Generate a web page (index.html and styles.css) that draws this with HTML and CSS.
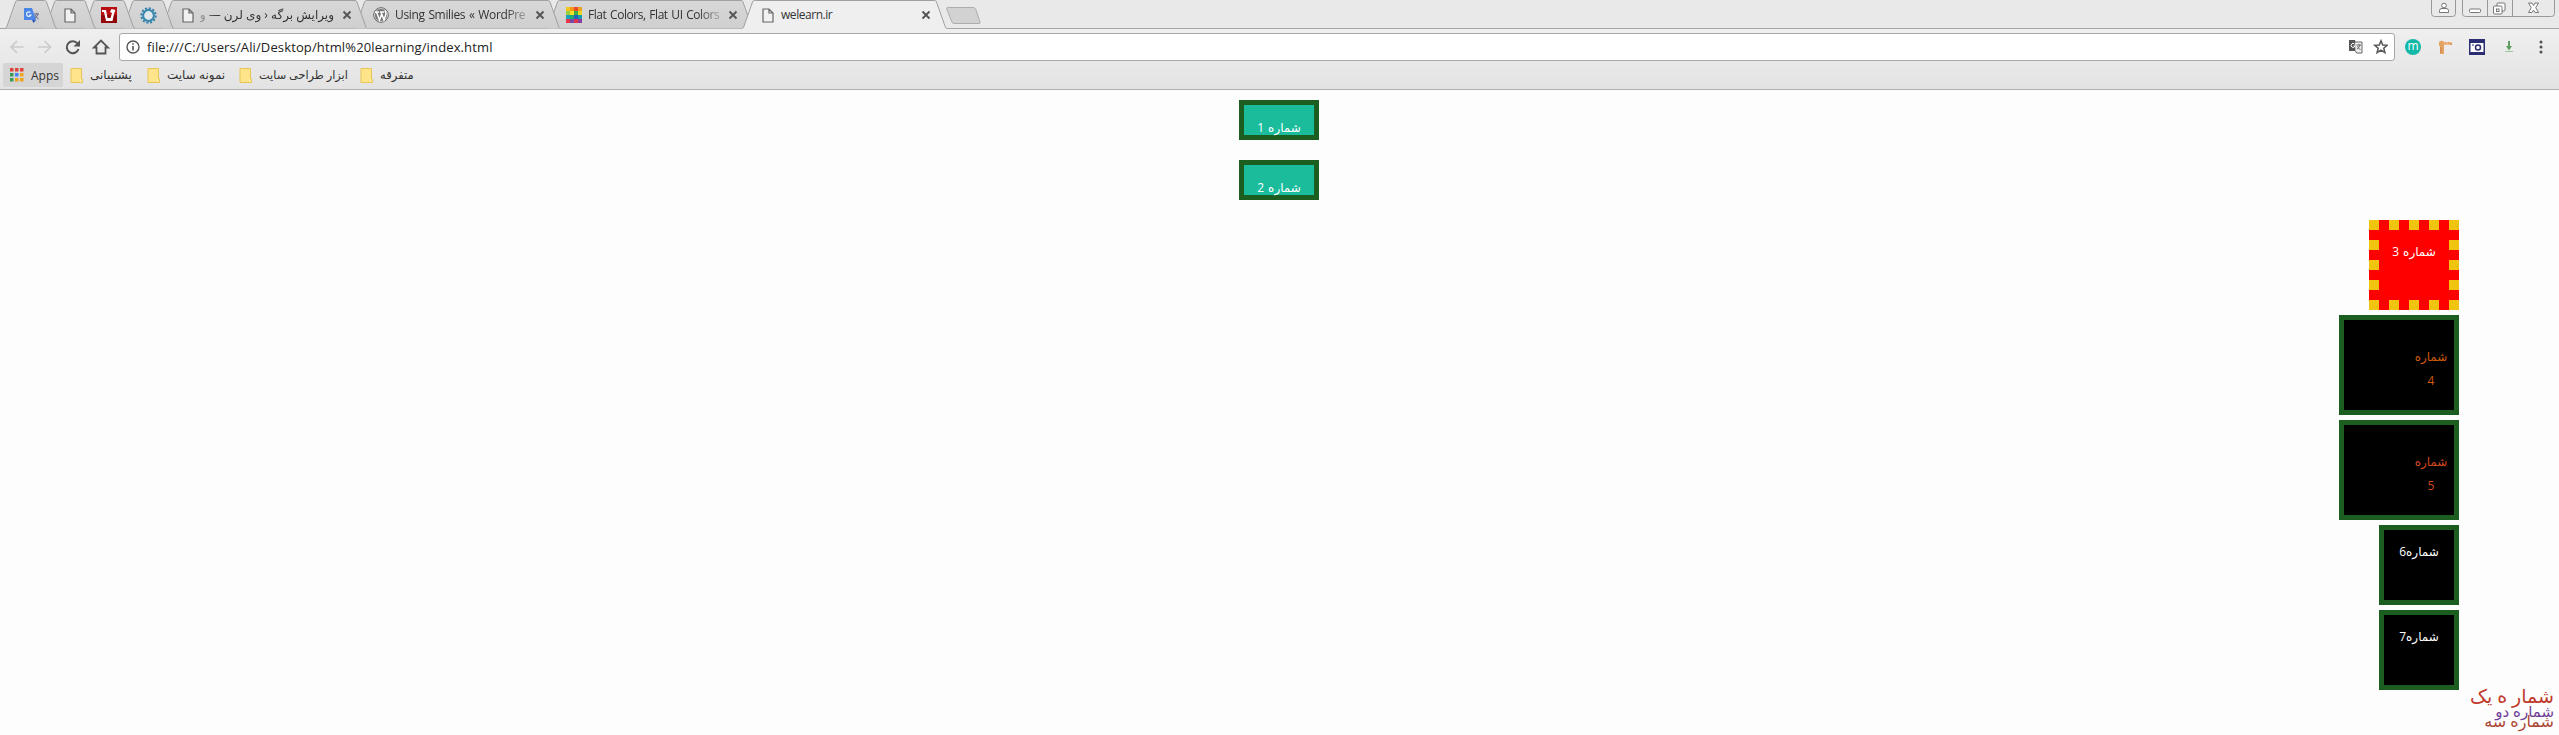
FILE: index.html
```
<!DOCTYPE html>
<html lang="en">
<head>
<meta charset="utf-8">
<title>welearn.ir</title>
<link rel="stylesheet" href="styles.css">
</head>
<body>
<svg width="0" height="0" class="defs">
  <defs>
    <linearGradient id="tabFill" x1="0" y1="0" x2="0" y2="1"><stop offset="0" stop-color="#d8d8d8"/><stop offset="1" stop-color="#cfcfcf"/></linearGradient>
    <symbol id="mini" viewBox="0 0 52 29"><path d="M0 28.5 1.5 27.5 10.5 2Q11 .5 12.500 .5H39.500Q41 .5 41.500 2L50.500 27.500 52 28.500" fill="url(#tabFill)" stroke="#a0a0a0"/></symbol>
    <symbol id="full" viewBox="0 0 206 29"><path d="M0 28.500 1.500 27.500 10.500 2Q11 .5 12.500 .5H194Q195.500 .5 196 2L205 27.500 206 28.500" fill="url(#tabFill)" stroke="#a0a0a0"/></symbol>
    <symbol id="page" viewBox="0 0 12 15"><path d="M1 1H7L11 5V14H1ZM7 1V5H11" fill="#f1f1f1" stroke="#666" stroke-width="1.200"/></symbol>
    <symbol id="close" viewBox="0 0 10 10"><path d="M1.500 1.500 8.500 8.500M8.500 1.500 1.500 8.500" stroke="#555" stroke-width="1.900" fill="none"/></symbol>
    <symbol id="folder" viewBox="0 0 13 15"><path d="M1 .5H11.500V11H12.500V14.500H1Z" fill="#ffe48a" stroke="#e9c456"/><path d="M10.500 11V14" stroke="#fff0b5"/></symbol>
  </defs>
</svg>

<header class="browser">
  <div class="tabstrip">
    <nav class="tabs">
      <div class="tab mini z8"><svg class="shape"><use href="#mini"/></svg>
        <svg class="icon" width="17" height="17" viewBox="0 0 17 17"><path d="M7 4H16V16H11Z" fill="#c9cdd2"/><path d="M1 1H9L13 13H1Z" fill="#4a86e8"/><path d="M9 13H13L10.500 16Z" fill="#2b56b5"/><path d="M7.500 5.500A2.300 2.300 0 1 0 8 8H6" stroke="#e8f0ff" stroke-width="1.200" fill="none"/><path d="M11 7H16M13.500 6V7M15 7Q14 10 11.500 11.500M12 8Q13 10.500 15.500 12" stroke="#668" fill="none"/></svg></div>
      <div class="tab mini z7"><svg class="shape"><use href="#mini"/></svg><svg class="icon" width="12" height="15"><use href="#page"/></svg></div>
      <div class="tab mini z6"><svg class="shape"><use href="#mini"/></svg>
        <svg class="icon" width="16" height="16" viewBox="0 0 16 16"><path d="M0 0H16V16H0Z" fill="#b90f12"/><path d="M0 8H16V16H0Z" fill="#940609"/><path d="M1 3H5L6.500 11H9.500L11 6 9 5 10.500 2 14.500 3 13 7 11.500 14H5L3 5H1Z" fill="#fff"/></svg></div>
      <div class="tab mini z5"><svg class="shape"><use href="#mini"/></svg>
        <svg class="icon" width="17" height="17" viewBox="0 0 17 17"><circle cx="8.500" cy="8.500" r="7.200" fill="none" stroke="#3585ad" stroke-width="2" stroke-dasharray="2.200 1.570"/><circle cx="8.500" cy="8.500" r="5.400" fill="#dfe8ec" stroke="#3585ad" stroke-width="2"/></svg></div>
      <div class="tab full first z4"><svg class="shape"><use href="#full"/></svg><svg class="icon" width="12" height="15"><use href="#page"/></svg><span class="title rtl" dir="rtl">ویرایش برگه ‹ وی لرن — و</span><svg class="close"><use href="#close"/></svg></div>
      <div class="tab full z3"><svg class="shape"><use href="#full"/></svg>
        <svg class="icon" width="16" height="16" viewBox="0 0 16 16"><circle cx="8" cy="8" r="7.300" fill="#777" stroke="#666"/><circle cx="8" cy="8" r="6.500" fill="none" stroke="#ddd" stroke-width=".8"/><path d="M2 5H6M3.500 5 6.500 13 8.500 7.500M7 5H11M8 5 11 13 13 7Q13 5 11.800 3.500" fill="none" stroke="#fff" stroke-width="1.500"/></svg>
        <span class="title fade">Using Smilies « WordPre</span><svg class="close"><use href="#close"/></svg></div>
      <div class="tab full z2"><svg class="shape"><use href="#full"/></svg>
        <svg class="icon" width="16" height="16" viewBox="0 0 16 16"><path d="M0 0H4V4H0Z" fill="#f5c51b"/><path d="M4 0H8V4H4Z" fill="#f39b17"/><path d="M8 0H12V4H8Z" fill="#e94a2b"/><path d="M12 0H16V4H12Z" fill="#f0a020"/><path d="M0 4H4V8H0Z" fill="#9acb38"/><path d="M4 4H8V8H4Z" fill="#f6df28"/><path d="M8 4H12V8H8Z" fill="#35b04a"/><path d="M12 4H16V8H12Z" fill="#e5d825"/><path d="M0 8H4V12H0Z" fill="#16a5bd"/><path d="M4 8H8V12H4Z" fill="#21aa72"/><path d="M8 8H12V12H8Z" fill="#2360bb"/><path d="M12 8H16V12H12Z" fill="#159cad"/><path d="M0 12H4V16H0Z" fill="#e8334a"/><path d="M4 12H8V16H4Z" fill="#744aa8"/><path d="M8 12H12V16H8Z" fill="#df3450"/><path d="M12 12H16V16H12Z" fill="#8b3b9c"/></svg>
        <span class="title fade flat">Flat Colors, Flat UI Colors</span><svg class="close"><use href="#close"/></svg></div>
      <div class="tab full active"><svg class="shape" viewBox="0 0 207 29"><path d="M0 28.500 1.500 27.500 10.500 2Q11 .5 12.500 .5H192.500Q194 .5 194.500 2L203.500 27.500 205 28.500V29H0Z" fill="#efefef"/><path d="M0 28.500 1.500 27.500 10.500 2Q11 .5 12.500 .5H192.500Q194 .5 194.500 2L203.500 27.500 205 28.500" fill="none" stroke="#a0a0a0"/></svg><svg class="icon" width="12" height="15"><use href="#page"/></svg><span class="title">welearn.ir</span><svg class="close"><use href="#close"/></svg></div>
      <svg class="newtab" width="36" height="18" viewBox="0 0 36 18"><path d="M2 .5H27Q29 .5 29.800 2.500L34 15Q34.500 16.500 33 16.500H8Q6.500 16.500 5.800 14.800L.8 2Q.5 .5 2 .5Z" fill="#d2d2d2" stroke="#adadad"/></svg>
    </nav>
    <div class="window-controls">
      <svg width="126" height="18" viewBox="0 0 126 18" fill="none" stroke="#777"><path d="M.5 0V13.500Q.5 16.500 3.500 16.500H21.500Q24.500 16.500 24.500 13.500V0M31.500 0V13.500Q31.500 16.500 34.500 16.500H120.500Q123.500 16.500 123.500 13.500V0M56.500 0V16M81.500 0V16" stroke="#999"/><circle cx="13" cy="5.500" r="2.300" fill="#fff"/><path d="M8.500 12.500V10.500Q8.500 8.500 11 8.500H15Q17.500 8.500 17.500 10.500V12.500Z" fill="#fff"/><rect x="38.500" y="9" width="11" height="3.500" rx="1" fill="#fff"/><rect x="66" y="3" width="8" height="8" rx="1" fill="#fff"/><rect x="62.500" y="6" width="8.500" height="8" rx="1" fill="#fff"/><rect x="65.500" y="9" width="2.500" height="2.500"/><path d="M97.500 3H101L102.500 5.500 104 3H107.500L104.700 7.700 107.500 12.500H104L102.500 10 101 12.500H97.500L100.300 7.700Z" fill="#fff"/></svg>
    </div>
  </div>

  <div class="toolbar">
    <svg class="nav-icons" width="119" height="28" viewBox="0 0 119 28" fill="none">
      <path d="M23.500 14H11M17 8 11 14 17 20M38 14H50.500M44.500 8 50.500 14 44.500 20" stroke="#cbcbcb" stroke-width="1.700"/>
      <path d="M77.500 10.500A6 6 0 1 0 78.500 16" stroke="#555" stroke-width="2"/><path d="M80 7V13.500H73.500Z" fill="#555"/>
      <path d="M94 14.500 101 7.500 108 14.500H105.500V20.500H96.500V14.500Z" stroke="#555" stroke-width="1.800"/>
    </svg>
    <div class="omnibox">
      <svg width="14" height="14" viewBox="0 0 14 14"><circle cx="7" cy="7" r="6" fill="none" stroke="#555" stroke-width="1.400"/><path d="M7 6V10.500M7 3.200V4.800" stroke="#555" stroke-width="1.600"/></svg>
      <span class="url">file:///C:/Users/Ali/Desktop/html%20learning/index.html</span>
      <svg width="40" height="16" viewBox="0 0 40 16"><path d="M1 1H7L10 12H1Z" fill="#555"/><path d="M7 3H14V14H8.500L7.500 12" fill="#eee" stroke="#666"/><path d="M6.500 5A2 2 0 1 0 7 7H5.500" stroke="#fff" fill="none"/><path d="M8.500 6H13M11 5V6M12 6Q11 9 9 10M9.500 7Q10.500 9.500 12.500 11" stroke="#666" fill="none"/><path d="M33 1.800 34.700 6 39.200 6.300 35.800 9.200 36.900 13.600 33 11.200 29.100 13.600 30.200 9.200 26.800 6.300 31.300 6Z" fill="none" stroke="#555" stroke-width="1.500"/></svg>
    </div>
    <div class="extensions">
      <span class="circle">m</span>
      <svg width="15" height="15" viewBox="0 0 15 15"><path d="M1 2Q3 0 6 1.500V14H2V6H1Z" fill="#e4a465"/><path d="M6 2H14V5H6Z" fill="#efb985"/><path d="M3 7V13M7 3H8M10 3H11M13 3V5" stroke="#c9803e"/></svg>
      <svg width="16" height="16" viewBox="0 0 16 16"><path d="M0 0H16V16H0Z" fill="#2b2e72"/><path d="M1.500 4H14.500V13H1.500Z" fill="#fff"/><circle cx="9" cy="8.500" r="2.500" fill="#fff" stroke="#2b2e72" stroke-width="1.500"/><path d="M3 6H5" stroke="#2b2e72"/></svg>
      <svg width="10" height="12" viewBox="0 0 10 12"><path d="M4 0H6V5H8L5 9.500 2 5H4Z" fill="#5e9f61"/><path d="M1 10.500H9" stroke="#9cc79c"/></svg>
      <svg width="4" height="14" viewBox="0 0 4 14" fill="#505050"><circle cx="2" cy="2" r="1.500"/><circle cx="2" cy="7" r="1.500"/><circle cx="2" cy="12" r="1.500"/></svg>
    </div>
  </div>

  <div class="bookmarks">
    <span class="apps"><svg width="14" height="14" viewBox="0 0 14 14"><path d="M0 0H3.500V3.500H0ZM5 0H8.500V3.500H5ZM10 0H13.500V3.500H10Z" fill="#dc4437"/><path d="M0 5H3.500V8.500H0Z" fill="#3b9a5a"/><path d="M5 5H8.500V8.500H5Z" fill="#4484ee"/><path d="M10 5H13.500V8.500H10Z" fill="#eda41d"/><path d="M0 10H3.500V13.500H0Z" fill="#3b9a5a"/><path d="M5 10H8.500V13.500H5ZM10 10H13.500V13.500H10Z" fill="#eda41d"/></svg>Apps</span>
    <span class="bookmark b1"><svg width="13" height="15"><use href="#folder"/></svg><bdi>پشتیبانی</bdi></span>
    <span class="bookmark b2"><svg width="13" height="15"><use href="#folder"/></svg><bdi>نمونه سایت</bdi></span>
    <span class="bookmark b3"><svg width="13" height="15"><use href="#folder"/></svg><bdi>ابزار طراحی سایت</bdi></span>
    <span class="bookmark b4"><svg width="13" height="15"><use href="#folder"/></svg><bdi>متفرقه</bdi></span>
  </div>
</header>

<main class="content" dir="rtl">
  <div class="box teal">شماره 1</div>
  <div class="box teal">شماره 2</div>
  <div class="box dashed">شماره 3<svg class="dashes" width="90" height="90" viewBox="0 0 90 90" fill="none" stroke="#f1c40f" stroke-width="10"><path d="M0 5H90M0 85H90M5 0V90M85 0V90" stroke-dasharray="10 10"/></svg></div>
  <div class="box large four">شماره<br>4</div>
  <div class="box large">شماره<br>5</div>
  <div class="box small">شماره6</div>
  <div class="box small">شماره7</div>
  <p class="line one">شمار ه یک</p>
  <p class="line two">شماره دو</p>
  <p class="line three">شماره سه</p>
</main>
</body>
</html>
```
FILE: styles.css
```
* { box-sizing: border-box; }
html { height: 735px; overflow: hidden; }
body { margin: 0; height: 735px; overflow: hidden; background: #fdfdfd; font-family: "Open Sans", "DejaVu Sans", sans-serif; font-size: 12px; color: #333; }
svg { display: block; flex: none; }
.defs { position: absolute; }
.browser { height: 90px; background: linear-gradient(#e9e9e9 0 28px, #efefef 29px, #e3e3e3 89px); border-bottom: 1px solid #b0b0b0; }
.tabstrip { height: 29px; display: flex; justify-content: space-between; box-shadow: inset 0 -1px #a6a6a6; }
.tabs { display: flex; padding-left: 5px; isolation: isolate; }
.tab { position: relative; height: 29px; display: flex; align-items: center; margin-right: -13px; }
.tab .shape { position: absolute; inset: 0; width: 100%; height: 29px; z-index: -1; }
.tab.mini { width: 52px; justify-content: center; }
.tab.full { width: 206px; padding: 0 15px 0 19px; }
.tab.first { padding-left: 21px; }
.tab.active { width: 207px; margin-left: 2px; padding: 0 18px 0 20px; }
.tab .icon { margin-top: 1px; }
.z8 { z-index: 8; } .z7 { z-index: 7; } .z6 { z-index: 6; } .z5 { z-index: 5; }
.z4 { z-index: 4; } .z3 { z-index: 3; } .z2 { z-index: 2; } .active { z-index: 9; }
.title { flex: 1; min-width: 0; margin: 0 6px; white-space: nowrap; line-height: 20px; letter-spacing: -.35px; word-spacing: 1px; }
.rtl { letter-spacing: 0; word-spacing: 0; margin-right: 8px; -webkit-mask-image: linear-gradient(to left, #000 118px, transparent 142px); mask-image: linear-gradient(to left, #000 118px, transparent 142px); }
.fade { -webkit-mask-image: linear-gradient(to right, #000 110px, transparent 140px); mask-image: linear-gradient(to right, #000 110px, transparent 140px); }
.flat { letter-spacing: -.45px; }
.active .title { margin-left: 7px; letter-spacing: -.45px; }
.close { width: 10px; height: 10px; margin-top: 1px; }
.newtab { margin: 7px 0 0 10px; }
.window-controls { padding-right: 2px; }
.toolbar { height: 33px; display: flex; align-items: center; padding: 4px 0 1px; }
.omnibox { flex: 1; height: 28px; display: flex; align-items: center; padding: 0 6px; background: #fff; border: 1px solid #a8a8a8; border-radius: 3px; }
.url { flex: 1; margin-left: 7px; font-size: 13px; line-height: 18px; letter-spacing: .13px; color: #222; }
.extensions { width: 164px; display: grid; grid-template-columns: repeat(5, 32px); place-items: center; padding-left: 2px; }
.circle { width: 16px; height: 16px; border-radius: 50%; background: #13b8a9; color: #fff; line-height: 14px; text-align: center; }
.bookmarks { height: 27px; padding: 0 0 1px 3px; display: flex; align-items: center; line-height: 17px; }
.bookmarks bdi { margin-top: -1px; }
.apps { width: 60px; height: 24px; display: flex; align-items: center; gap: 7px; padding-left: 7px; background: #d5d5d5; border-radius: 2px; }
.bookmark { display: flex; align-items: center; gap: 7px; margin-left: 7px; white-space: nowrap; }
.b1 { width: 70px; }
.b2 { width: 85px; }
.b3 { width: 114px; font-size: 11.300px; }
.b4 { width: 60px; font-size: 11.600px; }
.content { height: 645px; overflow: hidden; padding-top: 10px; }
.box { width: 80px; height: 80px; margin: 0 100px 5px auto; border: 5px solid #1b5e20; background: #000; color: #fff; text-align: center; line-height: 18px; padding-top: 13px; font-weight: 500; word-spacing: 1px; }
.teal { height: 40px; margin: 0 auto 20px 1239px; padding-top: 14px; background: #1abc9c; }
.content .teal { margin-right: 1240px; }
.dashed { position: relative; width: 90px; height: 90px; border: 10px solid transparent; background: red; }
.dashes { position: absolute; left: -10px; top: -10px; }
.large { width: 120px; height: 100px; padding: 25px 0 0 64px; line-height: 24px; color: #d1491e; }
.four { color: #cf5a0d; }
.line { margin: 0; padding-right: 5px; height: 10px; line-height: 10px; font-size: 16px; white-space: nowrap; }
.one { height: 16px; line-height: 12px; margin-top: -5px; font-size: 19px; color: #c0392b; }
.two { font-size: 15px; color: #713d98; }
.three { color: #ad4735; }
```
